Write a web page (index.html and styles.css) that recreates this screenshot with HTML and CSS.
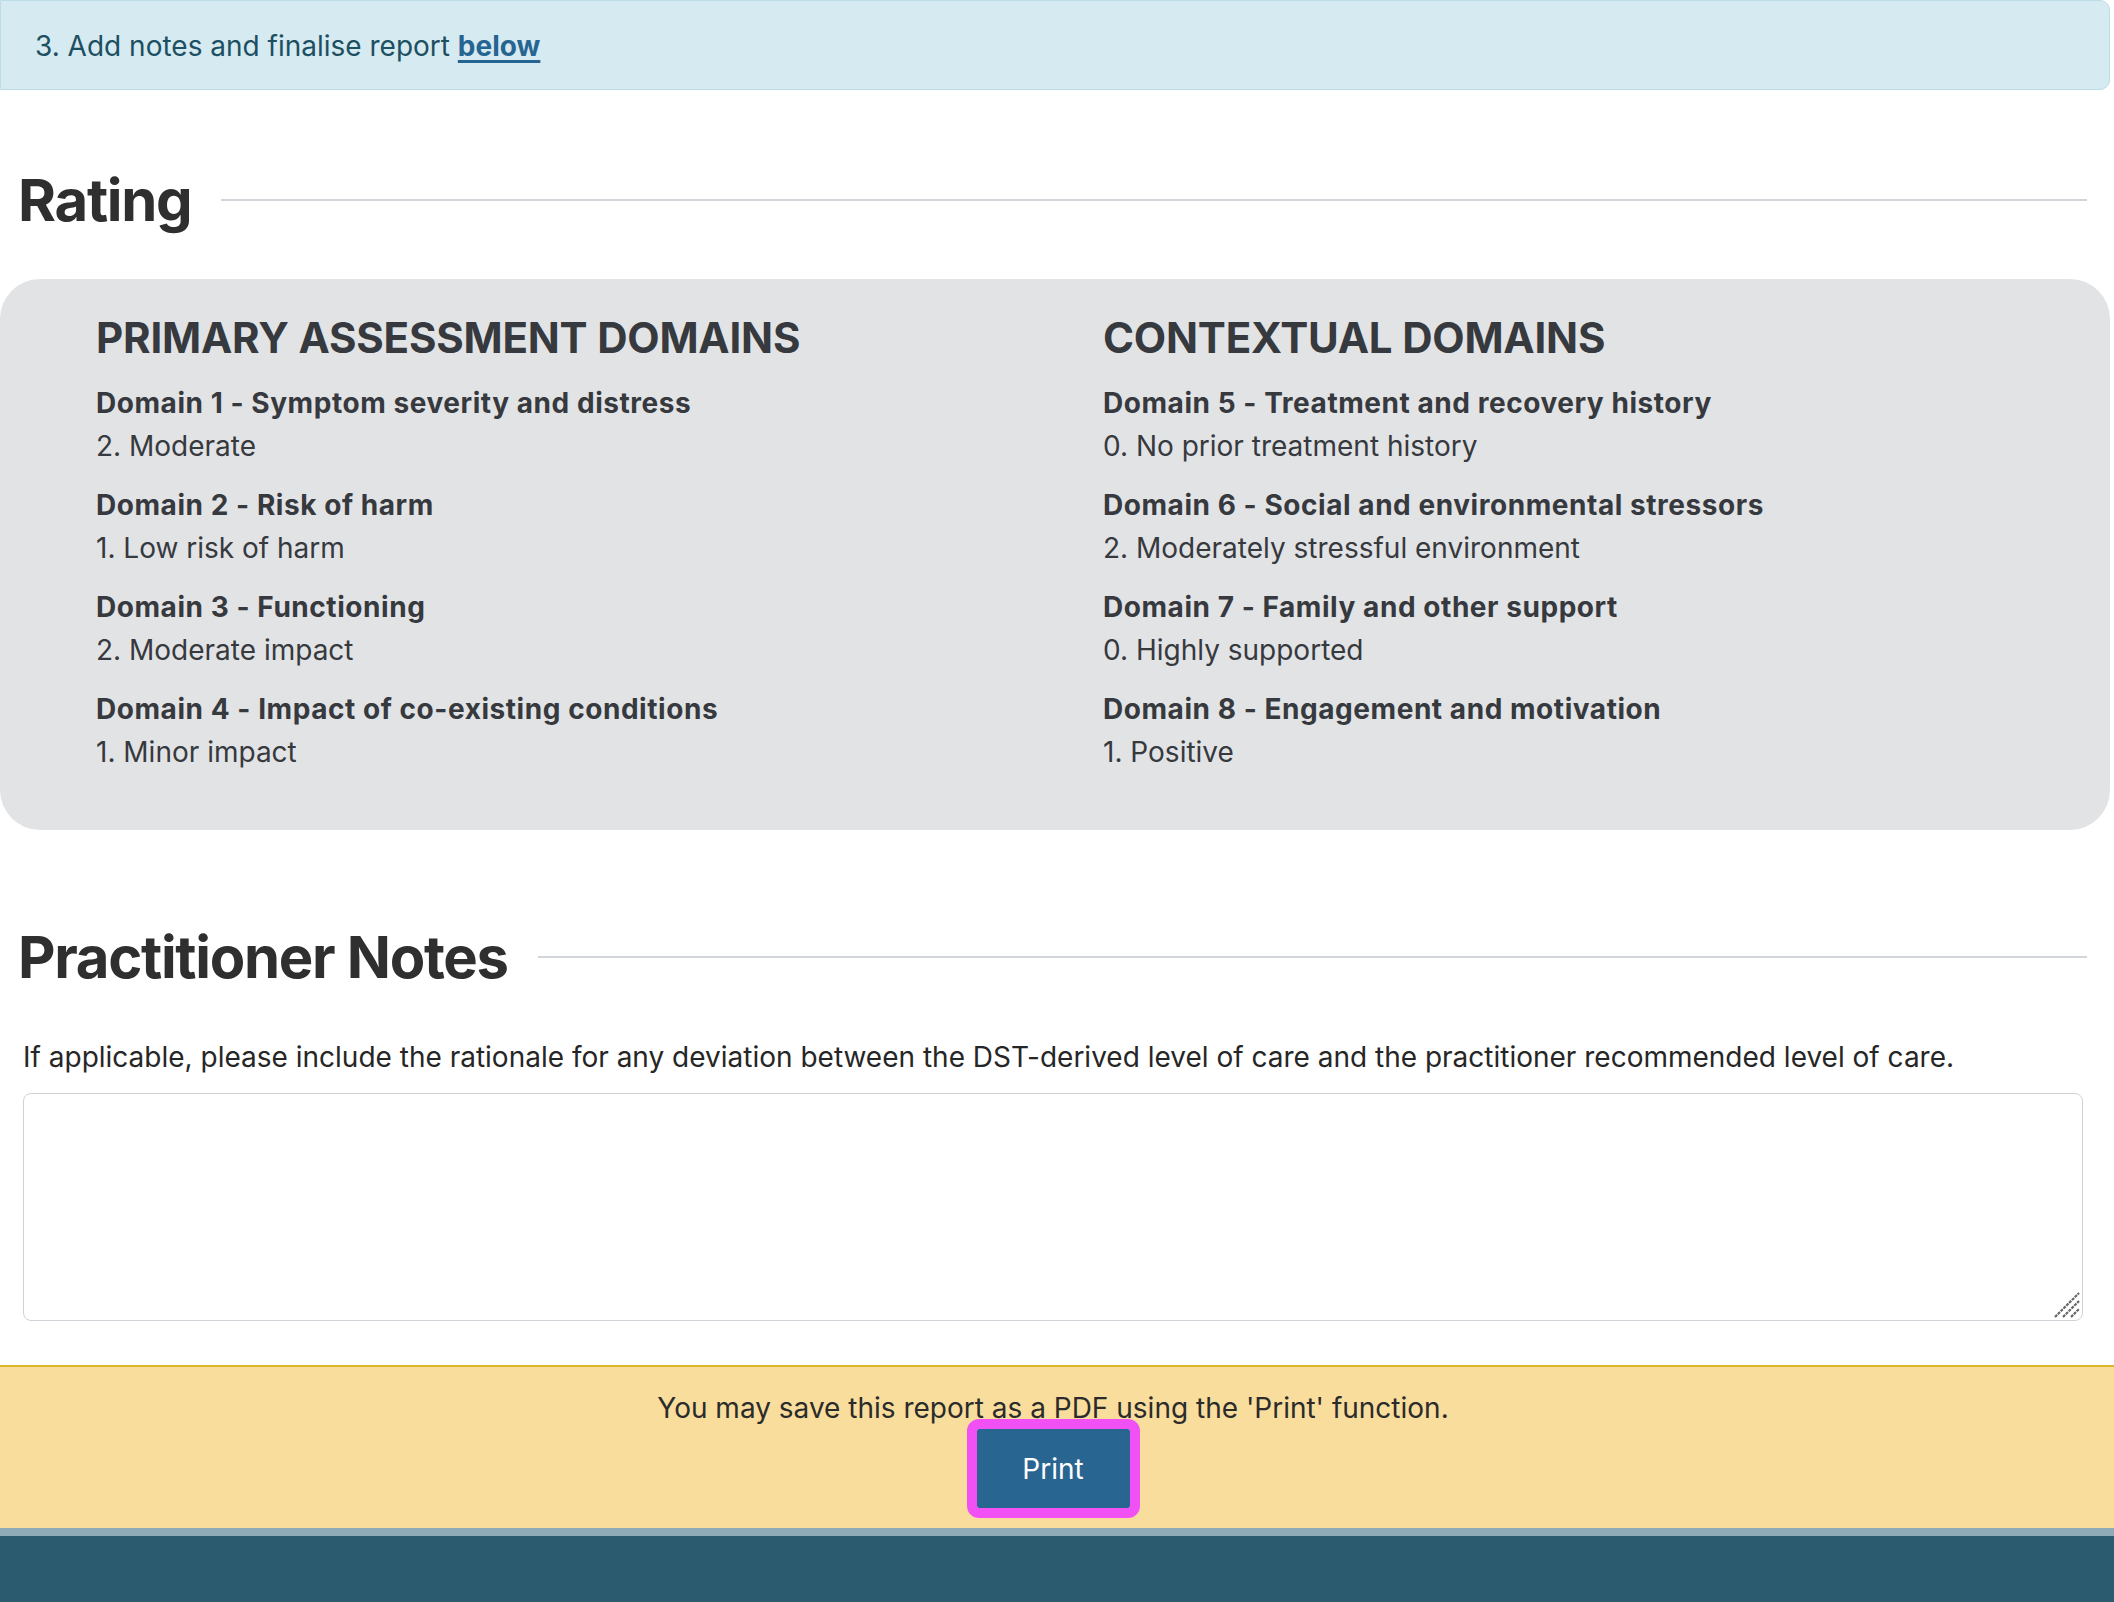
FILE: index.html
```html
<!DOCTYPE html>
<html lang="en">
<head>
<meta charset="utf-8">
<title>Report</title>
<link rel="stylesheet" href="styles.css">
</head>
<body>
<div class="page">
  <div class="alert">3. Add notes and finalise report <a href="#notes" class="alert-link">below</a></div>

  <h2 class="section-title rating-title"><span>Rating</span></h2>

  <div class="panel">
    <div class="col">
      <h3 class="col-title">PRIMARY ASSESSMENT DOMAINS</h3>
      <div class="item"><div class="item-title">Domain 1 - Symptom severity and distress</div><div class="item-value">2. Moderate</div></div>
      <div class="item"><div class="item-title">Domain 2 - Risk of harm</div><div class="item-value">1. Low risk of harm</div></div>
      <div class="item"><div class="item-title">Domain 3 - Functioning</div><div class="item-value">2. Moderate impact</div></div>
      <div class="item"><div class="item-title">Domain 4 - Impact of co-existing conditions</div><div class="item-value">1. Minor impact</div></div>
    </div>
    <div class="col">
      <h3 class="col-title">CONTEXTUAL DOMAINS</h3>
      <div class="item"><div class="item-title">Domain 5 - Treatment and recovery history</div><div class="item-value">0. No prior treatment history</div></div>
      <div class="item"><div class="item-title">Domain 6 - Social and environmental stressors</div><div class="item-value">2. Moderately stressful environment</div></div>
      <div class="item"><div class="item-title">Domain 7 - Family and other support</div><div class="item-value">0. Highly supported</div></div>
      <div class="item"><div class="item-title">Domain 8 - Engagement and motivation</div><div class="item-value">1. Positive</div></div>
    </div>
  </div>

  <h2 class="section-title notes-title" id="notes"><span>Practitioner Notes</span></h2>

  <div class="notes">
    <p class="notes-help">If applicable, please include the rationale for any deviation between the DST-derived level of care and the practitioner recommended level of care.</p>
    <div class="notes-field">
      <textarea class="notes-input" aria-label="Practitioner notes"></textarea>
      <svg class="resize-grip" width="26" height="26" viewBox="0 0 26 26" aria-hidden="true">
        <path d="M1 25 L25 1 M9 25 L25 9 M17 25 L25 17" stroke="#666666" stroke-width="2.2" stroke-dasharray="3 1" fill="none"/>
      </svg>
    </div>
  </div>
</div>

<div class="print-bar">
  <p class="print-text">You may save this report as a PDF using the 'Print' function.</p>
  <button class="print-btn" type="button">Print</button>
</div>
<div class="footer"></div>
</body>
</html>
```

FILE: styles.css
```css
html, body {
  margin: 0;
  padding: 0;
  background: #ffffff;
}
body {
  font-family: Inter, "Noto Sans", sans-serif;
  font-size: 28px;
  line-height: 1.5;
  color: #2b2b2b;
}
.page {
  margin-right: 4px;
}
.alert {
  box-sizing: border-box;
  height: 90px;
  padding: 2px 34px 0;
  display: flex;
  align-items: center;
  background: #d6eaf1;
  border: 1px solid #bcdde8;
  border-radius: 0 10px 10px 0;
  color: #1d4f62;
}
.alert-link {
  color: #266591;
  font-weight: 700;
  margin-left: 0.28em;
  text-decoration: underline;
  text-underline-offset: 4px;
  text-decoration-thickness: 3px;
}
.section-title {
  display: flex;
  align-items: center;
  gap: 30px;
  margin: 0;
  padding: 0 23px 0 18px;
  font-size: 58px;
  line-height: 72px;
  font-weight: 700;
  color: #2f2f2f;
  letter-spacing: -1.3px;
}
.section-title::after {
  content: "";
  flex: 1;
  height: 2px;
  background: #d2d5d9;
}
.rating-title {
  margin-top: 74px;
  margin-bottom: 43px;
}
.panel {
  display: grid;
  grid-template-columns: 1fr 1fr;
  column-gap: 96px;
  padding: 35px 96px 37px;
  background: #e2e3e5;
  border-radius: 40px;
  color: #36393e;
}
.col-title {
  margin: 0 0 23px;
  font-size: 42px;
  line-height: 48px;
  font-weight: 700;
  letter-spacing: -0.2px;
}
.item {
  margin-bottom: 23px;
}
.item-title {
  font-weight: 700;
  line-height: 36px;
  margin-bottom: 7px;
  letter-spacing: 0.55px;
}
.item-value {
  line-height: 36px;
}
.notes-title {
  margin-top: 91px;
}
.notes {
  padding: 0 27px 0 23px;
}
.notes-help {
  margin: 46px 0 18px;
  line-height: 36px;
  color: #262626;
}
.notes-field {
  position: relative;
}
.notes-input {
  display: block;
  box-sizing: border-box;
  width: 100%;
  height: 228px;
  margin: 0;
  border: 1px solid #cfd2d6;
  border-radius: 8px;
  background: #ffffff;
  font: inherit;
  resize: none;
}
.resize-grip {
  position: absolute;
  right: 3px;
  bottom: 3px;
  pointer-events: none;
}
.print-bar {
  margin-top: 44px;
  padding: 22px 8px 20px 0;
  background: #f9dd9c;
  border-top: 2px solid #dcb628;
  text-align: center;
}
.print-text {
  margin: 0;
  line-height: 38px;
  color: #2b2b2b;
}
.print-btn {
  display: inline-block;
  width: 153px;
  height: 79px;
  margin-top: 2px;
  background: #286590;
  color: #ffffff;
  border: none;
  border-radius: 2px;
  font-family: inherit;
  font-size: 28px;
  outline: 10px solid #f150f5;
  cursor: pointer;
}
.footer {
  height: 80px;
  background: #2a5b6e;
  border-top: 8px solid #8eabb7;
}
```
